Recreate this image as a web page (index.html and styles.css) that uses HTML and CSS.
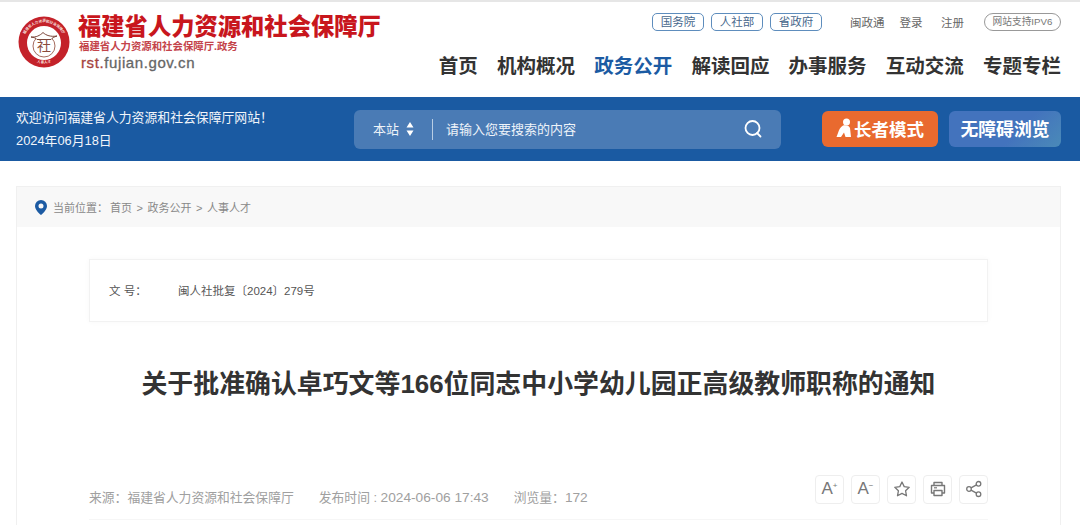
FILE: index.html
```html
<!DOCTYPE html>
<html lang="zh-CN">
<head>
  <meta charset="UTF-8">
  <title>关于批准确认卓巧文等166位同志中小学幼儿园正高级教师职称的通知</title>
  <link rel="stylesheet" href="styles.css">
</head>
<body>
  <header class="site-header">
    <div class="logo">
      <svg class="logo-mark" viewBox="0 0 52 52" width="52" height="52">
        <circle cx="26" cy="26" r="25.5" fill="#c4222a"/>
        <circle cx="26" cy="27" r="17" fill="#fff"/>
        <defs>
          <path id="ring-top" d="M5.500 32a21 21 0 1 1 41 0"/>
          <path id="ring-bottom" d="M12 42.500a22 22 0 0 0 28 0"/>
        </defs>
        <text class="ring-text"><textPath href="#ring-top" startOffset="50%" text-anchor="middle">福建省人力资源和社会保障厅</textPath></text>
        <text class="ring-text"><textPath href="#ring-bottom" startOffset="50%" text-anchor="middle">人事人才</textPath></text>
        <circle cx="26" cy="30" r="11" fill="#fff" stroke="#9a5a4c" stroke-width=".9"/>
        <path d="M13 21c5 .5 9-1.500 12-4.500 3 3 8 4.500 14 3.500-3 1-5 2-6 3.500H19c-1-1.500-3-2-6-2.500z" fill="#fff" stroke="#7a4438" stroke-width="1"/>
        <text class="logo-char" x="26" y="35" text-anchor="middle">社</text>
      </svg>
      <div class="logo-text">
        <div class="logo-title">福建省人力资源和社会保障厅</div>
        <div class="logo-sub">福建省人力资源和社会保障厅.政务</div>
        <div class="logo-url"><span class="logo-url-red">rst.</span>fujian.gov.cn</div>
      </div>
    </div>
    <div class="header-right">
      <div class="top-links">
        <a class="tag">国务院</a>
        <a class="tag">人社部</a>
        <a class="tag">省政府</a>
        <a class="top-link first">闽政通</a>
        <a class="top-link">登录</a>
        <a class="top-link last">注册</a>
        <a class="ipv6">网站支持IPV6</a>
      </div>
      <nav class="main-nav">
        <a>首页</a>
        <a>机构概况</a>
        <a class="active">政务公开</a>
        <a>解读回应</a>
        <a>办事服务</a>
        <a>互动交流</a>
        <a>专题专栏</a>
      </nav>
    </div>
  </header>

  <div class="blue-bar">
    <div class="welcome">
      <div>欢迎访问福建省人力资源和社会保障厅网站！</div>
      <div class="welcome-date">2024年06月18日</div>
    </div>
    <div class="search">
      <span class="search-scope">本站</span>
      <svg class="scope-arrows" viewBox="0 0 8 14" width="8" height="14"><path d="M4 0l3.500 5.500h-7zM4 14l-3.500-5.500h7z" fill="#fff"/></svg>
      <span class="search-input">请输入您要搜索的内容</span>
      <svg class="search-icon" viewBox="0 0 20 20" width="20" height="20"><circle cx="9.500" cy="9" r="7" fill="none" stroke="#fff" stroke-width="1.800"/><path d="M14 14l3.500 3.500" stroke="#fff" stroke-width="1.800" stroke-linecap="round"/></svg>
    </div>
    <a class="mode-btn elder">
      <svg viewBox="0 0 16 20" width="16" height="20"><circle cx="10.500" cy="4" r="3.500" fill="#fff"/><path d="M7 7.500c3-.5 6 0 7 2.500l1 9H9.500L8 14.500 5 19H.5l1.500-4c1-3 2-6 5-7.500z" fill="#fff"/></svg>
      长者模式
    </a>
    <a class="mode-btn barrier">无障碍浏览</a>
  </div>

  <main class="panel">
    <div class="crumbs">
      <svg viewBox="0 0 12 15" width="12" height="15"><path fill-rule="evenodd" d="M6 0a6 6 0 0 1 6 6c0 3.500-3.500 7-6 9-2.500-2-6-5.500-6-9a6 6 0 0 1 6-6zm0 3.500a2.500 2.500 0 1 0 0 5 2.500 2.500 0 0 0 0-5z" fill="#1c5ba3"/></svg>
      <span><span class="crumbs-label">当前位置：</span>首页 &gt; 政务公开 &gt; 人事人才</span>
    </div>
    <div class="article">
      <div class="doc-box">
        <span class="doc-label">文 号：</span>
        <span>闽人社批复〔2024〕279号</span>
      </div>
      <h1 class="doc-title">关于批准确认卓巧文等166位同志中小学幼儿园正高级教师职称的通知</h1>
      <div class="meta">
        <div class="meta-text">
          <span>来源：福建省人力资源和社会保障厅</span>
          <span>发布时间 : <span class="meta-num">2024-06-06 17:43</span></span>
          <span>浏览量：<span class="meta-num">172</span></span>
        </div>
        <div class="tools">
          <a class="tool"><span class="tool-a">A<sup>+</sup></span></a>
          <a class="tool"><span class="tool-a">A<sup>−</sup></span></a>
          <a class="tool">
            <svg viewBox="0 0 18 18" width="18" height="18"><path d="M9 2l2.200 4.600 5 .7-3.600 3.500.9 5L9 13.400l-4.500 2.400.9-5L1.800 7.300l5-.7z" fill="none" stroke="#777" stroke-width="1.300" stroke-linejoin="round"/></svg>
          </a>
          <a class="tool">
            <svg viewBox="0 0 18 18" width="18" height="18"><path d="M5 5V2.500h8V5M5 13H2.500V5.500h13V13H13M5 10.500h8v5H5z" fill="none" stroke="#777" stroke-width="1.400" stroke-linejoin="round"/><path d="M5 7.800h3" stroke="#777" stroke-width="1.200"/></svg>
          </a>
          <a class="tool">
            <svg viewBox="0 0 18 18" width="18" height="18"><g fill="none" stroke="#777" stroke-width="1.300"><circle cx="4" cy="9" r="2.300"/><circle cx="13.500" cy="3.800" r="2.300"/><circle cx="13.500" cy="14.200" r="2.300"/><path d="M6 7.900l5.500-3M6 10.100l5.500 3"/></g></svg>
          </a>
        </div>
      </div>
      <div class="meta-rule"></div>
    </div>
  </main>
</body>
</html>
```

FILE: styles.css
```css
* {
  box-sizing: border-box;
  margin: 0;
  padding: 0;
}

html, body {
  height: 525px;
  overflow: hidden;
}

body {
  font-family: "Liberation Sans", "Noto Sans CJK SC", sans-serif;
  background-color: #fff;
  color: #333;
  border-top: 2px solid #e6e6e6;
}

a {
  color: inherit;
  text-decoration: none;
}

.site-header {
  height: 95px;
  display: flex;
  justify-content: space-between;
  padding: 0 19px 0 18px;
}

.logo {
  display: flex;
  align-items: flex-start;
  padding-top: 14px;
}

.logo-mark {
  flex: none;
}

.ring-text {
  font-size: 3.600px;
  font-weight: 700;
  fill: #f6dcd8;
}

.logo-char {
  font-size: 14px;
  fill: #8a4a3c;
}

.logo-text {
  margin-left: 8px;
  margin-top: -2px;
}

.logo-title {
  font-size: 23.300px;
  line-height: 26px;
  font-weight: 900;
  color: #c8161d;
  white-space: nowrap;
}

.logo-sub {
  font-size: 10.400px;
  line-height: 13px;
  font-weight: 700;
  color: #c4434a;
  white-space: nowrap;
  margin-left: 1px;
}

.logo-url {
  font-size: 15px;
  line-height: 19px;
  color: #666;
  margin-left: 3px;
  letter-spacing: 0.6px;
  -webkit-text-stroke: 0.3px currentColor;
}

.logo-url-red {
  color: #a5433e;
}

.header-right {
  display: flex;
  flex-direction: column;
  align-items: flex-end;
}

.top-links {
  display: flex;
  align-items: center;
  margin-top: 11px;
  height: 18px;
}

.tag {
  width: 52px;
  height: 18px;
  line-height: 17px;
  margin-right: 7px;
  border: 1px solid #5e8dbd;
  border-radius: 5px;
  text-align: center;
  font-size: 11.500px;
  color: #47678c;
}

.top-link {
  font-size: 11.500px;
  color: #666;
  margin-left: 15px;
}

.top-link.first {
  margin-left: 21px;
}

.top-link.last {
  margin-left: 18.500px;
}

.ipv6 {
  width: 77px;
  height: 18px;
  line-height: 16px;
  margin-left: 20px;
  border: 1px solid #999;
  border-radius: 9px;
  text-align: center;
  font-size: 9.700px;
  color: #777;
}

.main-nav {
  display: flex;
  gap: 19.200px;
  margin-top: 20px;
}

.main-nav a {
  font-size: 19.500px;
  line-height: 30px;
  font-weight: 700;
  color: #333;
}

.main-nav a.active {
  color: #1c5ba3;
}

.blue-bar {
  height: 64px;
  display: flex;
  align-items: center;
  padding: 0 19px 0 16px;
  background-color: #1a5aa2;
  color: #fff;
}

.welcome {
  width: 338px;
  font-size: 12.850px;
  line-height: 23px;
  color: #f2f5fa;
}

.search {
  width: 427px;
  height: 39px;
  display: flex;
  align-items: center;
  padding: 0 18px 0 19px;
  background-color: #4a7bb5;
  border-radius: 6px;
  font-size: 13px;
  color: #eef3f9;
}

.search-scope {
  margin-top: -2px;
}

.scope-arrows {
  margin-left: 7px;
}

.search-input {
  flex: 1;
  margin-left: 18px;
  padding-left: 13px;
  border-left: 1px solid #b8cde4;
  line-height: 20px;
  padding-top: 1px;
}

.mode-btn {
  height: 36px;
  display: flex;
  align-items: center;
  justify-content: center;
  padding-bottom: 2px;
  border-radius: 6px;
  font-weight: 700;
  color: #fff;
}

.elder {
  width: 116px;
  margin-left: 41px;
  gap: 2px;
  font-size: 17.500px;
  background-color: #e96a2f;
}

.barrier {
  width: 112px;
  margin-left: 11px;
  font-size: 17.800px;
  background: linear-gradient(135deg, #4373bd 60%, #4a8ab8);
}

.panel {
  margin: 25px 19px 0 16px;
  height: 340px;
  border-left: 1px solid #f0f0f0;
  border-right: 1px solid #f0f0f0;
  border-top: 1px solid #f0f0f0;
}

.crumbs {
  height: 40px;
  display: flex;
  align-items: center;
  gap: 6px;
  padding-left: 18px;
  background-color: #f8f8f8;
  font-size: 11px;
  word-spacing: 1.500px;
  color: #888;
}

.crumbs-label {
  margin-right: 2px;
}

.article {
  padding: 32px 72px 0;
}

.doc-box {
  height: 63px;
  display: flex;
  align-items: center;
  padding: 0 0 1px 19px;
  border: 1px solid #f2f2f2;
  box-shadow: 0 0 6px rgba(0, 0, 0, 0.03);
  font-size: 11.500px;
  color: #555;
}

.doc-label {
  width: 69px;
}

.doc-title {
  margin-top: 46px;
  height: 32px;
  font-size: 25.900px;
  line-height: 32px;
  font-weight: 700;
  color: #333;
  text-align: center;
  white-space: nowrap;
}

.meta {
  display: flex;
  justify-content: space-between;
  align-items: center;
  margin-top: 74px;
  height: 30px;
}

.meta-text {
  display: flex;
  gap: 25px;
  margin-top: 14px;
  font-size: 12.800px;
  color: #a0a0a0;
}

.meta-num {
  font-size: 13.700px;
}

.tools {
  display: flex;
  gap: 7px;
}

.tool {
  width: 29px;
  height: 29px;
  display: flex;
  align-items: center;
  justify-content: center;
  border: 1px solid #eee;
  border-radius: 4px;
}

.tool-a {
  font-size: 17px;
  color: #777;
}

.tool-a sup {
  font-size: 8px;
  vertical-align: 6px;
  line-height: 0;
}

.meta-rule {
  margin-top: 15px;
  height: 1px;
  background-color: #f6f6f6;
}
```
